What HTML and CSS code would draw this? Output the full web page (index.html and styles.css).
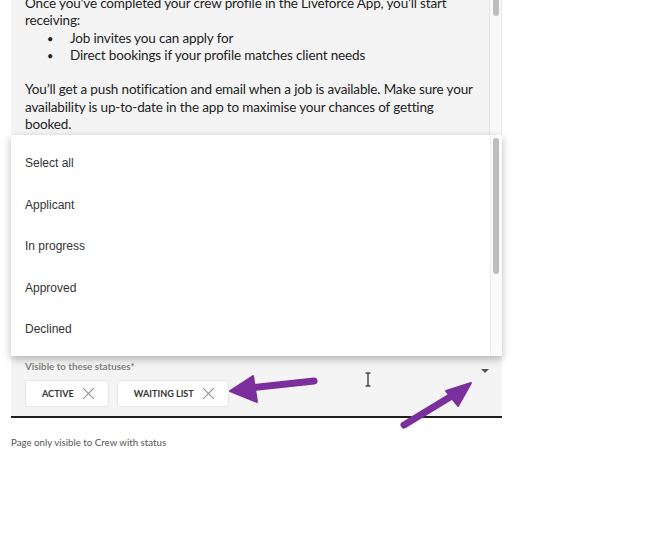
FILE: index.html
```html
<!DOCTYPE html>
<html lang="en">
<head>
  <meta charset="UTF-8" />
  <title>Page visibility</title>
  <link rel="stylesheet" href="styles.css">
</head>
<body>

  <!-- Campo de contenido + selector de estados -->
  <div class="field">
    <div class="editor">
      <div class="editor-text">
        <p>Once you’ve completed your crew profile in the Liveforce App, you’ll start receiving:</p>
        <ul>
          <li>Job invites you can apply for</li>
          <li>Direct bookings if your profile matches client needs</li>
        </ul>
        <p class="gap">You’ll get a push notification and email when a job is available. Make sure your availability is up-to-date in the app to maximise your chances of getting booked.</p>
      </div>
      <div class="track"><div class="thumb"></div></div>
    </div>

    <div class="statuses">
      <div class="label">Visible to these statuses*</div>
      <div class="chips">
        <span class="chip">ACTIVE <span class="chip-x"></span></span>
        <span class="chip">WAITING LIST <span class="chip-x"></span></span>
      </div>
      <span class="caret"></span>
    </div>
  </div>

  <div class="helper">Page only visible to Crew with status</div>

  <!-- Menu desplegable abierto -->
  <div class="menu">
    <ul class="menu-list">
      <li>Select all</li>
      <li>Applicant</li>
      <li>In progress</li>
      <li>Approved</li>
      <li>Declined</li>
    </ul>
    <div class="menu-track"><div class="menu-thumb"></div></div>
  </div>

  <!-- Anotaciones (flechas y cursor) -->
  <svg class="notes" width="670" height="544" viewBox="0 0 670 544">
    <g fill="#7b2f9d" stroke="#7b2f9d" stroke-linecap="round" stroke-linejoin="round">
      <line x1="314" y1="381" x2="250" y2="388" stroke-width="7"/>
      <polygon points="230,391 253,376 257,402" stroke-width="2"/>
      <line x1="404" y1="425" x2="455" y2="394" stroke-width="7"/>
      <polygon points="471,383 446,391 458,406" stroke-width="2"/>
    </g>
    <g stroke="#222" stroke-width="1.2" fill="none">
      <line x1="368" y1="373" x2="368" y2="386"/>
      <line x1="365.5" y1="373" x2="370.5" y2="373"/>
      <line x1="365.5" y1="386" x2="370.5" y2="386"/>
    </g>
  </svg>

</body>
</html>
```

FILE: styles.css
```css
body {
  margin: 0;
  background: #ffffff;
  font-family: 'Lato', 'Open Sans', sans-serif;
  color: #222;
  position: relative;
  width: 670px;
  height: 544px;
  overflow: hidden;
}

.field {
  margin-left: 11px;
  width: 491px;
  background: #f4f4f4;
  border-bottom: 2px solid #1e1e1e;
}

.editor {
  display: flex;
  height: 354px;
  overflow: hidden;
}

.editor-text {
  flex: 1;
  padding: 0 14px;
  margin-top: -5px;
  font-size: 13.5px;
  letter-spacing: -0.15px;
  line-height: 17.3px;
}

.editor-text p {
  margin: 0;
}

.editor-text p.gap {
  margin-top: 17.3px;
}

.editor-text ul {
  margin: 0;
  padding-left: 45px;
  list-style: none;
}

.editor-text li {
  position: relative;
}

.editor-text li::before {
  content: "•";
  position: absolute;
  left: -23px;
  font-size: 11px;
}

.track {
  width: 11px;
  border-left: 1px solid #e3e3e3;
  border-right: 1px solid #ececec;
  background: #f9f9f9;
  position: relative;
}

.thumb {
  position: absolute;
  top: -4px;
  left: 3px;
  width: 6px;
  height: 20px;
  border-radius: 3px;
  background: #bdbdbd;
}

.statuses {
  position: relative;
  padding: 6px 14px 9px;
}

.label {
  font-size: 9.8px;
  font-weight: bold;
  color: #808080;
  line-height: 12px;
}

.chips {
  display: flex;
  gap: 8px;
  margin-top: 8px;
}

.chip {
  display: inline-flex;
  align-items: center;
  gap: 9px;
  height: 27px;
  padding: 0 14px 0 16px;
  box-sizing: border-box;
  background: #fff;
  border: 1px solid #e6e6e6;
  border-radius: 3px;
  font-size: 9.1px;
  font-weight: bold;
  color: #333;
}

.chip-x {
  position: relative;
  width: 11px;
  height: 11px;
}

.chip-x::before,
.chip-x::after {
  content: "";
  position: absolute;
  left: -2px;
  top: 5px;
  width: 15px;
  height: 1px;
  background: #8c8c8c;
  transform: rotate(45deg);
}

.chip-x::after {
  transform: rotate(-45deg);
}

.caret {
  position: absolute;
  right: 13px;
  top: 15px;
  border-left: 4.5px solid transparent;
  border-right: 4.5px solid transparent;
  border-top: 4.5px solid #555;
}

.helper {
  margin: 18px 0 0 11px;
  font-size: 9.7px;
  color: #555;
}

/* Menu desplegable */
.menu {
  position: absolute;
  top: 135px;
  left: 11px;
  width: 491px;
  height: 221px;
  background: #fff;
  box-shadow: 0 3px 8px rgba(0, 0, 0, 0.28);
  display: flex;
  font-family: 'Liberation Sans', Arial, sans-serif;
}

.menu-list {
  flex: 1;
  list-style: none;
  margin: 0;
  padding: 8px 0 0 14px;
}

.menu-list li {
  height: 41.5px;
  line-height: 41.5px;
  font-size: 12px;
  color: #333;
}

.menu-track {
  width: 11px;
  border-left: 1px solid #ececec;
  background: #fafafa;
  position: relative;
}

.menu-thumb {
  position: absolute;
  top: 3px;
  left: 2px;
  width: 6px;
  height: 136px;
  border-radius: 3px;
  background: #bdbdbd;
}

.notes {
  position: absolute;
  top: 0;
  left: 0;
  pointer-events: none;
}
```
